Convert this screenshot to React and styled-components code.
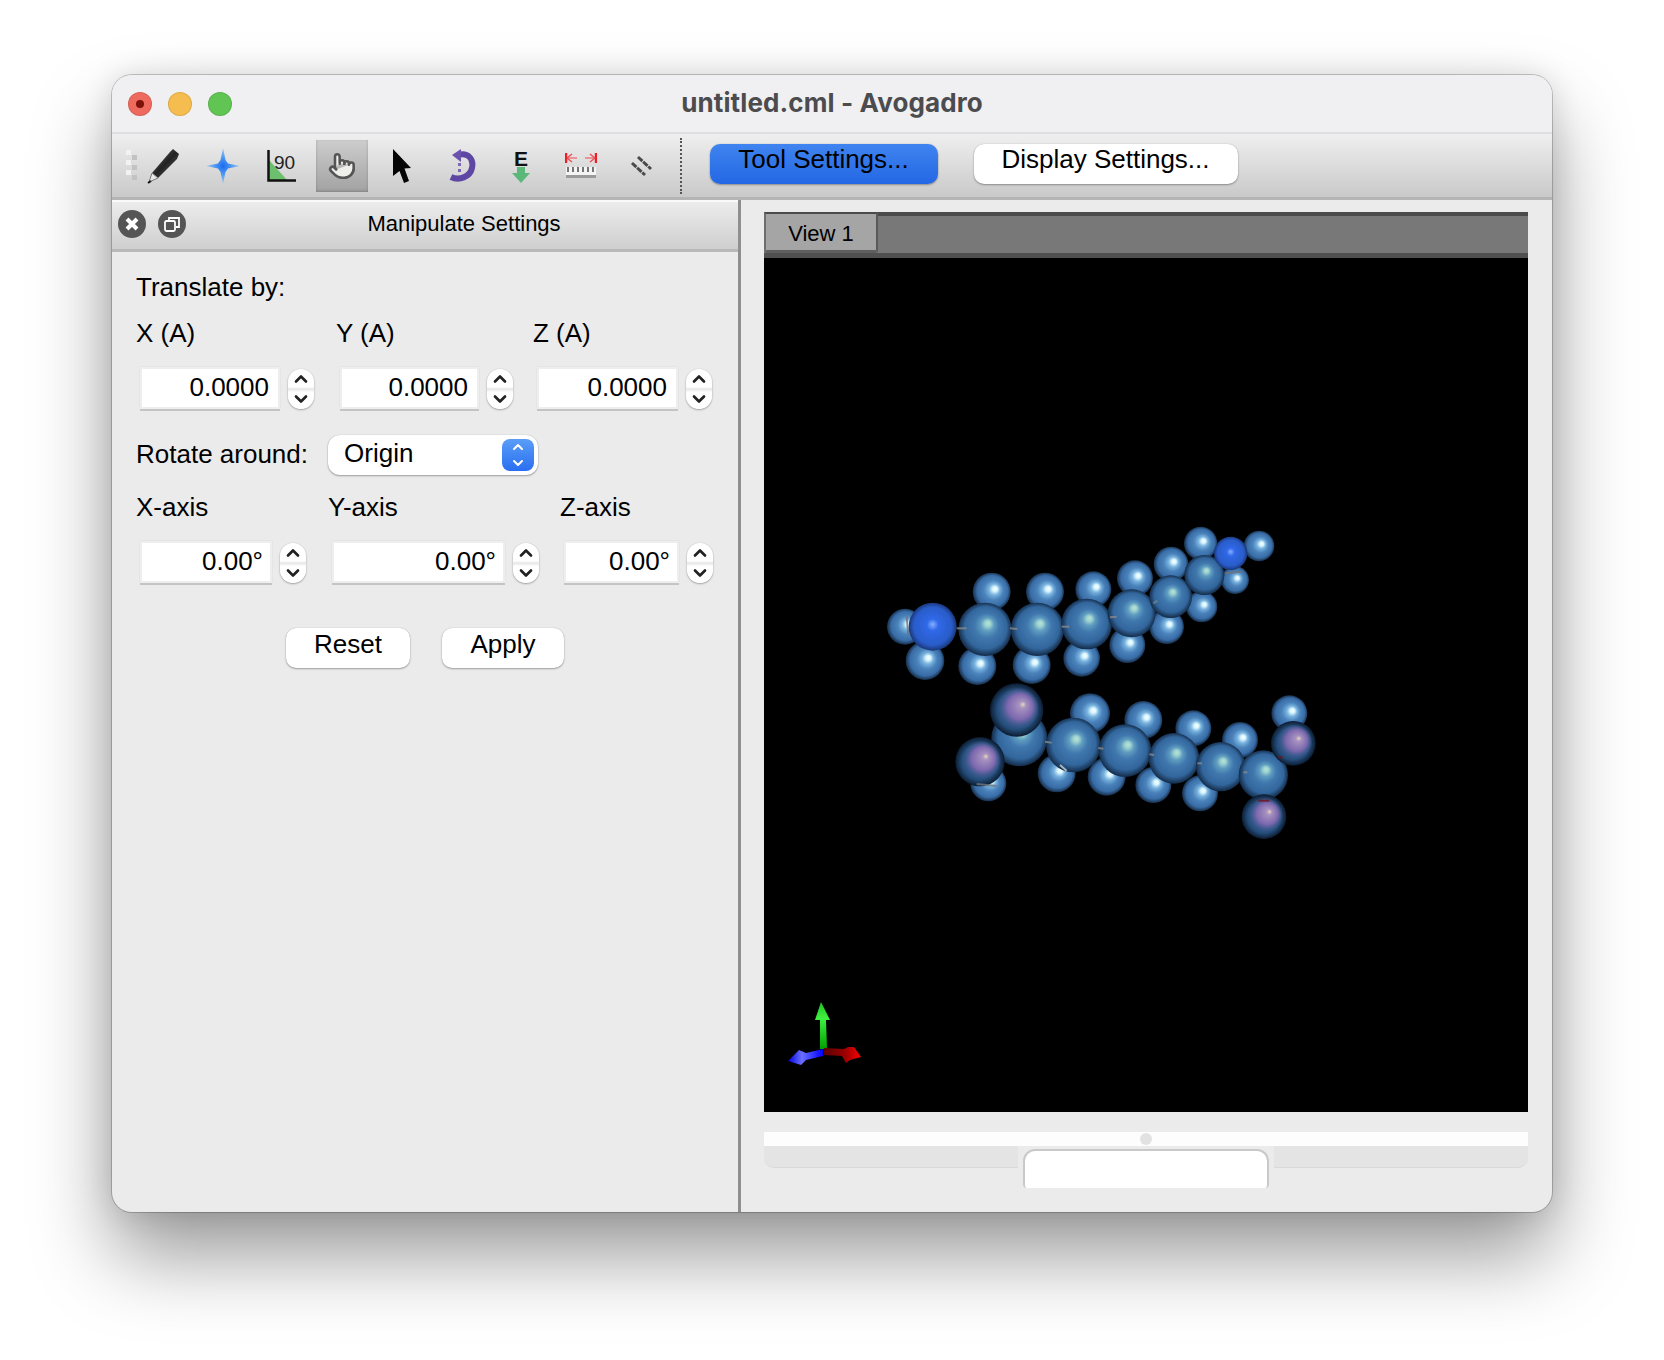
import React from "react";
import styled, { createGlobalStyle } from "styled-components";
import { ChevronUp, ChevronDown, Pointer } from "lucide-react";

const GlobalStyle = createGlobalStyle`
  html, body { margin: 0; padding: 0; background: #fff; }
  body { font-family: "Liberation Sans", Arial, sans-serif; color: #000; }
  * { box-sizing: border-box; }
`;

const Page = styled.div`
  width: 1664px;
  height: 1360px;
  padding: 75px 0 0 112px;
  overflow: hidden;
  background: #fff;
`;

const Window = styled.div`
  width: 1440px;
  height: 1137px;
  display: flex;
  flex-direction: column;
  border-radius: 20px;
  overflow: hidden;
  background: #ebebeb;
  box-shadow: 0 0 0 1px rgba(0, 0, 0, 0.2), 0 44px 80px rgba(0, 0, 0, 0.4), 0 0 30px rgba(0, 0, 0, 0.12);
`;

const TitleBar = styled.div`
  position: relative;
  height: 57px;
  flex: none;
  display: flex;
  align-items: center;
  padding-left: 16px;
  gap: 16px;
  background: #f0f0f2;
`;

const Light = styled.div`
  width: 24px;
  height: 24px;
  border-radius: 50%;
  display: flex;
  align-items: center;
  justify-content: center;
  background: ${(p) => p.$color};
  box-shadow: inset 0 0 0 1px rgba(0, 0, 0, 0.1);
`;

const LightDot = styled.div`
  width: 8px;
  height: 8px;
  border-radius: 50%;
  background: #7c1209;
`;

const WindowTitle = styled.div`
  position: absolute;
  left: 0;
  right: 0;
  padding-bottom: 2px;
  text-align: center;
  font-family: "Inter", "Liberation Sans", sans-serif;
  font-size: 26px;
  font-weight: 700;
  letter-spacing: 0.1px;
  color: #4c4c4e;
`;

const Toolbar = styled.div`
  height: 68px;
  flex: none;
  display: flex;
  align-items: center;
  padding-left: 13px;
  border-top: 2px solid #dedee0;
  border-bottom: 3px solid #b4b4b4;
  background: linear-gradient(#efefef, #c9c9c9);
`;

const Tools = styled.div`
  display: flex;
  gap: 7.7px;
  margin-left: -2px;
`;

const Tool = styled.div`
  width: 52px;
  height: 52px;
  display: flex;
  align-items: center;
  justify-content: center;
  background: ${(p) => (p.$active ? "linear-gradient(#cdcdcd, #a2a2a2)" : "none")};
  box-shadow: ${(p) => (p.$active ? "inset 0 -1px 3px rgba(0,0,0,0.2)" : "none")};
`;

const Separator = styled.div`
  width: 0;
  height: 56px;
  margin: 0 28px 0 13px;
  border-left: 2px dotted #555;
`;

const PushButton = styled.div`
  height: 40px;
  width: ${(p) => p.$width}px;
  margin: ${(p) => p.$margin || "0"};
  display: flex;
  align-items: center;
  justify-content: center;
  padding-bottom: 8px;
  border-radius: 10px;
  font-size: 26px;
  background: ${(p) => (p.$primary ? "linear-gradient(#3f84ef, #2467e5)" : "#fff")};
  box-shadow: 0 1px 2px rgba(0, 0, 0, 0.32), 0 0 1px rgba(0, 0, 0, 0.25);
`;

const BarButton = styled(PushButton)`
  transform: translateY(-2px);
`;

const Main = styled.div`
  flex: 1;
  min-height: 0;
  display: flex;
`;

const Dock = styled.div`
  width: 626px;
  flex: none;
  display: flex;
  flex-direction: column;
`;

const DockTitle = styled.div`
  height: 52px;
  flex: none;
  display: flex;
  align-items: center;
  padding: 0 0 4px 6px;
  border-top: 2px solid #fafafa;
  border-bottom: 3px solid #b9b9b9;
  background: linear-gradient(#ececec, #cfcfcf);
`;

const DockButton = styled.div`
  width: 28px;
  height: 28px;
  margin-right: 12px;
  border-radius: 50%;
  display: flex;
  align-items: center;
  justify-content: center;
  background: #555;
`;

const DockLabel = styled.div`
  flex: 1;
  text-align: center;
  font-size: 22px;
  padding-right: 8px;
`;

const Form = styled.div`
  padding: 20px 24px 0;
  display: flex;
  flex-direction: column;
`;

const Label = styled.div`
  font-size: 26px;
  line-height: 30px;
  white-space: nowrap;
`;

const FieldGrid = styled.div`
  display: grid;
  grid-template-columns: ${(p) => p.$columns};
  margin-top: ${(p) => p.$top}px;
  row-gap: 19px;
`;

const Field = styled.div`
  display: flex;
  align-items: flex-end;
  gap: 8px;
  margin-left: 4px;
`;

const NumberBox = styled.div`
  width: ${(p) => p.$width}px;
  height: 42px;
  padding: 0 ${(p) => p.$inset}px 2px 0;
  display: flex;
  align-items: center;
  justify-content: flex-end;
  font-size: 26px;
  background: #fff;
  box-shadow: inset 0 0 0 2px #eeeeee, 0 2px 0 #c4c4c4, 0 0 1px #c8c8c8;
`;

const Spin = styled.div`
  width: 26px;
  height: 40px;
  flex: none;
  display: flex;
  flex-direction: column;
  align-items: center;
  justify-content: center;
  border-radius: 13px;
  background: linear-gradient(#fff 45%, #e6e6e6 50%, #fff 58%);
  box-shadow: 0 1px 2px rgba(0, 0, 0, 0.3), 0 0 1px rgba(0, 0, 0, 0.25);
  color: #222;
`;

const RotateRow = styled.div`
  display: flex;
  align-items: center;
  margin-top: 26px;
`;

const RotateLabel = styled(Label)`
  padding-bottom: 3px;
`;

const Combo = styled.div`
  width: 210px;
  height: 40px;
  margin-left: 20px;
  padding: 0 4px 0 16px;
  display: flex;
  align-items: center;
  justify-content: space-between;
  border-radius: 12px;
  font-size: 26px;
  background: #fff;
  box-shadow: 0 1px 2px rgba(0, 0, 0, 0.32), 0 0 1px rgba(0, 0, 0, 0.25);
`;

const ComboText = styled.span`
  padding-bottom: 3px;
`;

const ComboStepper = styled.div`
  width: 32px;
  height: 32px;
  display: flex;
  flex-direction: column;
  align-items: center;
  justify-content: center;
  border-radius: 8px;
  color: #fff;
  background: linear-gradient(#5a9df8, #2a6ff0);
`;

const Actions = styled.div`
  display: flex;
  justify-content: center;
  gap: 32px;
  margin-top: 45px;
`;

const Divider = styled.div`
  width: 3px;
  flex: none;
  background: #8f8f8f;
`;

const ViewPane = styled.div`
  flex: 1;
  min-width: 0;
  padding: 12px 24px 0 23px;
  display: flex;
  flex-direction: column;
`;

const TabBar = styled.div`
  height: 46px;
  flex: none;
  display: flex;
  background: #787878;
  border-top: 4px solid #4b4b4b;
  border-bottom: 5px solid #505050;
`;

const Tab = styled.div`
  width: 114px;
  height: 41px;
  margin-top: -4px;
  padding-top: 3px;
  display: flex;
  align-items: center;
  justify-content: center;
  font-size: 22px;
  background: #a5a5a5;
  border: 2px solid #5a5a5a;
  border-top-color: #4b4b4b;
  border-bottom: 3px solid #5f5f5f;
  border-left-color: #6e6e6e;
  border-radius: 0 0 3px 3px;
`;

const Viewport = styled.svg`
  display: block;
  width: 764px;
  height: 854px;
  flex: none;
  background: #000;
`;

const Slider = styled.div`
  margin-top: 20px;
  height: 14px;
  flex: none;
  display: flex;
  align-items: center;
  justify-content: center;
  background: #fdfdfd;
`;

const SliderDot = styled.div`
  width: 12px;
  height: 12px;
  border-radius: 50%;
  background: #e2e2e2;
`;

const Groove = styled.div`
  display: flex;
  align-items: flex-start;
`;

const GroovePart = styled.div`
  flex: 1;
  height: 22px;
  background: #e4e4e4;
  border-bottom: 1px solid #d9d9d9;
  border-radius: ${(p) => (p.$side === "left" ? "0 0 0 10px" : "0 0 10px 0")};
`;

const GrooveTab = styled.div`
  width: 246px;
  height: 39px;
  margin: 3px 5px 0;
  background: #fff;
  border: 2px solid #c9c9c9;
  border-bottom: none;
  border-radius: 12px 12px 4px 4px;
`;

const C = 0, H = 1, N = 2, O = 3;

// atoms in crop coordinates, back to front
const atoms = [
  [135, 350, 54, H], [195, 452, 58, H], [395, 245, 57, H], [352, 468, 57, H], [555, 245, 57, H], [515, 465, 57, H],
  [700, 238, 54, H], [665, 445, 55, H], [825, 205, 54, H], [802, 405, 54, H], [933, 162, 52, H], [920, 350, 52, H],
  [1022, 100, 50, H], [1025, 290, 47, H], [1197, 108, 46, H], [1125, 210, 42, H],
  [218, 350, 72, N], [375, 358, 80, C], [532, 358, 80, C], [680, 342, 76, C], [815, 310, 72, C], [932, 260, 64, C],
  [1033, 195, 60, C], [1112, 130, 50, N],
  [385, 820, 54, H], [690, 610, 60, H], [850, 630, 57, H], [1000, 655, 54, H], [1140, 690, 54, H], [1288, 610, 54, H],
  [590, 790, 57, H], [740, 800, 57, H], [880, 825, 54, H], [1020, 850, 54, H],
  [478, 685, 84, C], [640, 705, 82, C], [795, 722, 79, C], [942, 745, 76, C], [1082, 770, 74, C], [1210, 795, 74, C],
  [470, 600, 80, O], [360, 755, 74, O], [1300, 700, 67, O], [1212, 920, 67, O],
];

const bonds = [
  [290, 355, 320, 355, "#8a8a8a"], [450, 355, 472, 357, "#8a8a8a"], [605, 350, 628, 350, "#8a8a8a"], [750, 322, 770, 320, "#8a8a8a"],
  [880, 280, 892, 272, "#77808a"], [555, 695, 575, 698, "#8a8a8a"], [715, 714, 730, 716, "#8a8a8a"], [868, 733, 882, 735, "#8a8a8a"],
  [1012, 760, 1026, 760, "#8a8a8a"], [1150, 787, 1162, 787, "#8a8a8a"], [1255, 742, 1268, 742, "#7a1020"], [1195, 872, 1228, 872, "#7a1020"],
  [140, 320, 145, 375, "#6f7278"], [1095, 190, 1145, 185, "#6f7278"], [350, 822, 410, 828, "#6f7880"], [600, 765, 620, 782, "#c8d4d8"],
];

const atomFill = ["url(#carbon)", "url(#hydrogen)", "url(#nitrogen)", "url(#carbon)"];
const sx = (x) => 860 + x / 3;
const sy = (y) => 510 + y / 3;

const Atom = ({ a }) => {
  const [x, y, r, kind] = a;
  return (
    <g>
      <circle cx={sx(x)} cy={sy(y)} r={r / 3} fill={kind === O ? "url(#halo)" : atomFill[kind]} />
      {kind === O && <circle cx={sx(x + 5)} cy={sy(y - 5)} r={(r * 0.78) / 3} fill="url(#oxygen)" />}
    </g>
  );
};

const Scene = () => (
  <Viewport viewBox="764 258 764 854">
    <defs>
      <radialGradient id="hydrogen" cx="50%" cy="50%" r="52%" fx="60%" fy="42%">
        <stop offset="0%" stopColor="#f4ffff" />
        <stop offset="12%" stopColor="#dcf6ff" />
        <stop offset="28%" stopColor="#78b2de" />
        <stop offset="50%" stopColor="#4a82ba" />
        <stop offset="78%" stopColor="#386ca6" />
        <stop offset="100%" stopColor="#122338" />
      </radialGradient>
      <radialGradient id="carbon" cx="50%" cy="50%" r="52%" fx="56%" fy="38%">
        <stop offset="0%" stopColor="#b4e4d8" />
        <stop offset="10%" stopColor="#a0d4d0" />
        <stop offset="24%" stopColor="#5f9cc0" />
        <stop offset="44%" stopColor="#4078ae" />
        <stop offset="76%" stopColor="#32669c" />
        <stop offset="100%" stopColor="#10223a" />
      </radialGradient>
      <radialGradient id="nitrogen" cx="50%" cy="50%" r="52%" fx="50%" fy="45%">
        <stop offset="0%" stopColor="#86aeff" />
        <stop offset="24%" stopColor="#2f68e8" />
        <stop offset="76%" stopColor="#2a5cc8" />
        <stop offset="100%" stopColor="#16306a" />
      </radialGradient>
      <radialGradient id="halo" cx="50%" cy="50%" r="50%">
        <stop offset="0%" stopColor="#2a5888" />
        <stop offset="72%" stopColor="#26507e" />
        <stop offset="100%" stopColor="#0c1c30" />
      </radialGradient>
      <radialGradient id="oxygen" cx="50%" cy="50%" r="50%" fx="62%" fy="40%">
        <stop offset="0%" stopColor="#e6d6bc" />
        <stop offset="16%" stopColor="#a892c0" />
        <stop offset="62%" stopColor="#7c68ae" />
        <stop offset="100%" stopColor="#4a6098" stopOpacity="0" />
      </radialGradient>
      <linearGradient id="axisRed" x1="0" x2="1" y1="0" y2="0">
        <stop offset="0%" stopColor="#5a0000" />
        <stop offset="60%" stopColor="#a00000" />
        <stop offset="100%" stopColor="#ff0000" />
      </linearGradient>
      <linearGradient id="axisGreen" x1="0" x2="0" y1="0" y2="1">
        <stop offset="0%" stopColor="#20c020" />
        <stop offset="35%" stopColor="#40f040" />
        <stop offset="100%" stopColor="#00a000" />
      </linearGradient>
      <linearGradient id="axisBlue" x1="0" x2="1" y1="0" y2="0">
        <stop offset="0%" stopColor="#0000e0" />
        <stop offset="40%" stopColor="#6a70ff" />
        <stop offset="100%" stopColor="#0000ff" />
      </linearGradient>
      <filter id="soft">
        <feGaussianBlur stdDeviation="0.7" />
      </filter>
    </defs>
    <g filter="url(#soft)">
      {atoms.map((a, i) => <Atom key={i} a={a} />)}
      {bonds.map(([x1, y1, x2, y2, c], i) => (
        <line key={i} x1={sx(x1)} y1={sy(y1)} x2={sx(x2)} y2={sy(y2)} stroke={c} strokeWidth="2" opacity="0.8" />
      ))}
      <path d="M821 1002 L830 1020 L826 1020 L827 1049 L820 1049 L820 1020 L815 1020 Z" fill="url(#axisGreen)" />
      <path d="M824 1048 L844 1049 L848 1047 L854 1047 L861 1057 L850 1060 L846 1063 L842 1056 L824 1055 Z" fill="url(#axisRed)" />
      <path d="M823 1049 L806 1053 L799 1050 L788 1061 L801 1065 L806 1060 L823 1056 Z" fill="url(#axisBlue)" />
    </g>
  </Viewport>
);

const GripIcon = () => (
  <svg width="14" height="32" viewBox="0 0 14 32">
    {[[1, 0], [7, 5], [1, 10], [7, 15], [1, 20], [7, 25]].map(([x, y]) => (
      <rect key={y} x={x} y={y} width="5" height="5" fill={y % 10 === 0 ? "#f2f2f2" : "#c2c2c2"} />
    ))}
  </svg>
);

const PenIcon = () => (
  <svg width="34" height="36" viewBox="0 0 34 36">
    <defs>
      <linearGradient id="penBody" x1="0" y1="0" x2="1" y2="1">
        <stop offset="0%" stopColor="#777" />
        <stop offset="50%" stopColor="#222" />
        <stop offset="100%" stopColor="#666" />
      </linearGradient>
    </defs>
    <path d="M27 1 L33 6 L31 11 L12 30 L6 25 L24 4 Z" fill="url(#penBody)" />
    <path d="M6 25 L12 30 L3 34 Z" fill="#e8e8e8" stroke="#777" strokeWidth="1" />
    <path d="M2 35 L5 33" stroke="#111" strokeWidth="2" />
  </svg>
);

const StarIcon = () => (
  <svg width="34" height="36" viewBox="0 0 34 36">
    <defs>
      <radialGradient id="starFill">
        <stop offset="0%" stopColor="#1a6cf0" />
        <stop offset="55%" stopColor="#5aa0f2" />
        <stop offset="100%" stopColor="#a8c8e8" />
      </radialGradient>
    </defs>
    <path d="M17 0 L19.5 12 L22 15.5 L34 18 L22 20.5 L19.5 24 L17 36 L14.5 24 L12 20.5 L0 18 L12 15.5 L14.5 12 Z" fill="url(#starFill)" />
  </svg>
);

const AngleIcon = () => (
  <svg width="30" height="32" viewBox="0 0 30 32">
    <path d="M2 10 L2 30 L20 30 Z" fill="#6cbf6c" />
    <path d="M1.5 0 L1.5 30.5 L29 30.5" fill="none" stroke="#111" strokeWidth="2.5" />
    <text x="7" y="19" fontFamily="Liberation Sans, sans-serif" fontSize="19" fill="#222">90</text>
  </svg>
);

const ArrowIcon = () => (
  <svg width="20" height="34" viewBox="0 0 20 34">
    <path d="M1 0 L19 19 L12.5 19.5 L17 32 L12 34 L7.5 22 L1 27 Z" fill="#050505" />
  </svg>
);

const RotateIcon = () => (
  <svg width="30" height="34" viewBox="0 0 30 34">
    <path d="M12 6 C22 3 28 10 26 19 C24 28 13 32 5 28" fill="none" stroke="#5e46a4" strokeWidth="6" />
    <path d="M15 0 L15 13 L6 6 Z" fill="#6a52ae" />
    <rect x="12" y="14" width="3" height="3" fill="#7a68b4" />
    <rect x="12" y="20" width="3" height="3" fill="#7a68b4" />
  </svg>
);

const EnergyIcon = () => (
  <svg width="24" height="38" viewBox="0 0 24 38">
    <text x="12" y="19" textAnchor="middle" fontFamily="Liberation Sans, sans-serif" fontSize="21" fontWeight="700" fill="#111">E</text>
    <path d="M8 20 H16 V26 H21 L12 36 L3 26 H8 Z" fill="#5cb87a" />
  </svg>
);

const RulerIcon = () => (
  <svg width="32" height="26" viewBox="0 0 32 26">
    <path d="M1 0 V10 M31 0 V10" stroke="#f01c24" strokeWidth="2.4" />
    <path d="M2 5 H12 M20 5 H30" stroke="#f07a80" strokeWidth="1.6" />
    <path d="M2 5 L7 1 M2 5 L7 9 M30 5 L25 1 M30 5 L25 9" stroke="#f04a50" strokeWidth="1.4" fill="none" />
    <rect x="1" y="14" width="30" height="8" fill="#f4f4f4" />
    <path d="M3 14 V19 M8 14 V19 M13 14 V19 M18 14 V19 M23 14 V19 M28 14 V19" stroke="#555" strokeWidth="1.6" />
    <rect x="1" y="22" width="30" height="3" fill="#9a9a9a" />
  </svg>
);

const BondIcon = () => (
  <svg width="24" height="24" viewBox="0 0 24 24">
    <path d="M9 3 L22 15 M3 9 L16 21" stroke="#4a4a4a" strokeWidth="3" strokeDasharray="6 1" />
  </svg>
);

const CloseGlyph = () => (
  <svg width="16" height="16" viewBox="0 0 16 16">
    <path d="M3 3 L13 13 M13 3 L3 13" stroke="#fff" strokeWidth="4" />
  </svg>
);

const FloatGlyph = () => (
  <svg width="18" height="18" viewBox="0 0 18 18" fill="none" stroke="#fff" strokeWidth="1.8">
    <rect x="2" y="6" width="10" height="10" rx="1.5" />
    <path d="M6 5 V3 H16 V12 H13" />
  </svg>
);

const Stepper = () => (
  <Spin>
    <ChevronUp size={20} strokeWidth={3.2} />
    <ChevronDown size={20} strokeWidth={3.2} />
  </Spin>
);

const NumberField = ({ value, width, inset }) => (
  <Field>
    <NumberBox $width={width} $inset={inset}>{value}</NumberBox>
    <Stepper />
  </Field>
);

export default function App() {
  return (
    <>
      <GlobalStyle />
      <Page>
        <Window>
          <TitleBar>
            <Light $color="#ee6a5f"><LightDot /></Light>
            <Light $color="#f5bd4f" />
            <Light $color="#61c554" />
            <WindowTitle>untitled.cml - Avogadro</WindowTitle>
          </TitleBar>
          <Toolbar>
            <GripIcon />
            <Tools>
              <Tool><PenIcon /></Tool>
              <Tool><StarIcon /></Tool>
              <Tool><AngleIcon /></Tool>
              <Tool $active><Pointer size={28} strokeWidth={2.2} color="#555" fill="#eeeeea" /></Tool>
              <Tool><ArrowIcon /></Tool>
              <Tool><RotateIcon /></Tool>
              <Tool><EnergyIcon /></Tool>
              <Tool><RulerIcon /></Tool>
              <Tool><BondIcon /></Tool>
            </Tools>
            <Separator />
            <BarButton $primary $width={228}>Tool Settings...</BarButton>
            <BarButton $width={264} $margin="0 0 0 36px">Display Settings...</BarButton>
          </Toolbar>
          <Main>
            <Dock>
              <DockTitle>
                <DockButton><CloseGlyph /></DockButton>
                <DockButton><FloatGlyph /></DockButton>
                <DockLabel>Manipulate Settings</DockLabel>
              </DockTitle>
              <Form>
                <Label>Translate by:</Label>
                <FieldGrid $columns="200px 197px 1fr" $top={16}>
                  <Label>X (A)</Label>
                  <Label>Y (A)</Label>
                  <Label>Z (A)</Label>
                  <NumberField value="0.0000" width={140} inset={11} />
                  <NumberField value="0.0000" width={139} inset={11} />
                  <NumberField value="0.0000" width={141} inset={11} />
                </FieldGrid>
                <RotateRow>
                  <RotateLabel>Rotate around:</RotateLabel>
                  <Combo>
                    <ComboText>Origin</ComboText>
                    <ComboStepper>
                      <ChevronUp size={18} strokeWidth={3} />
                      <ChevronDown size={18} strokeWidth={3} />
                    </ComboStepper>
                  </Combo>
                </RotateRow>
                <FieldGrid $columns="192px 232px 1fr" $top={17}>
                  <Label>X-axis</Label>
                  <Label>Y-axis</Label>
                  <Label>Z-axis</Label>
                  <NumberField value="0.00°" width={132} inset={9} />
                  <NumberField value="0.00°" width={173} inset={9} />
                  <NumberField value="0.00°" width={115} inset={9} />
                </FieldGrid>
                <Actions>
                  <PushButton $width={124}>Reset</PushButton>
                  <PushButton $width={122}>Apply</PushButton>
                </Actions>
              </Form>
            </Dock>
            <Divider />
            <ViewPane>
              <TabBar>
                <Tab>View 1</Tab>
              </TabBar>
              <Scene />
              <Slider><SliderDot /></Slider>
              <Groove>
                <GroovePart $side="left" />
                <GrooveTab />
                <GroovePart $side="right" />
              </Groove>
            </ViewPane>
          </Main>
        </Window>
      </Page>
    </>
  );
}
